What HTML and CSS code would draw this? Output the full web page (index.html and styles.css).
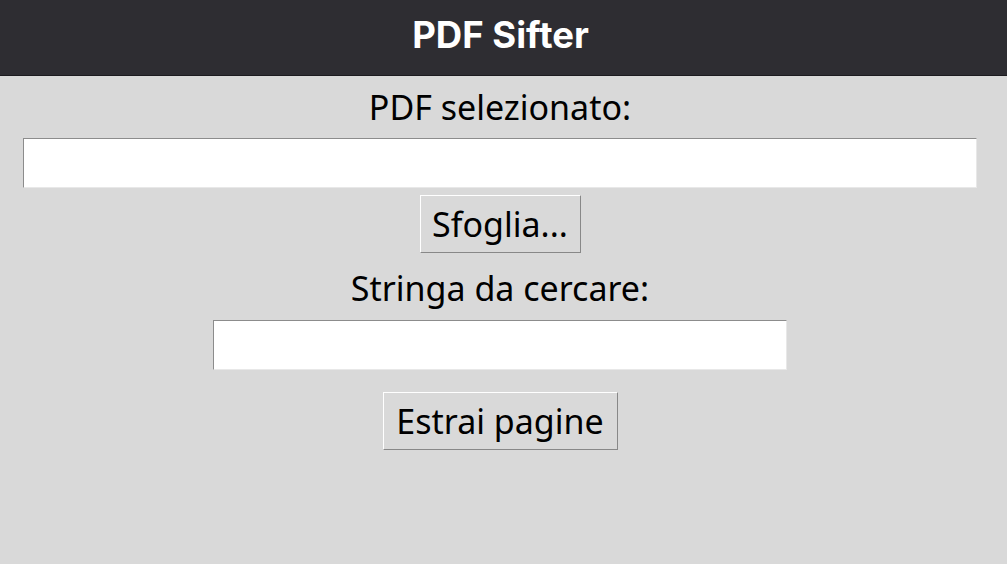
FILE: index.html
```html
<!DOCTYPE html>
<html lang="it">
<head>
<meta charset="utf-8">
<title>PDF Sifter</title>
<link rel="stylesheet" href="styles.css">
</head>
<body>
<header class="topbar"><h1 class="title">PDF Sifter</h1></header>
<main class="form">
  <label class="label label-pdf" for="pdf">PDF selezionato:</label>
  <input class="entry entry-wide" id="pdf" type="text">
  <button class="btn btn-browse" type="button">Sfoglia...</button>
  <label class="label label-search" for="q">Stringa da cercare:</label>
  <input class="entry entry-narrow" id="q" type="text">
  <button class="btn btn-extract" type="button">Estrai pagine</button>
</main>
</body>
</html>
```
FILE: styles.css
```css
html, body {
  margin: 0;
  padding: 0;
  height: 100%;
}
body {
  background: #d9d9d9;
  font-family: "Noto Sans", "DejaVu Sans", sans-serif;
  color: #000;
}
.topbar {
  box-sizing: border-box;
  height: 76px;
  background: #2e2d32;
  border-bottom: 1px solid #1c1b1f;
  display: flex;
  align-items: center;
  justify-content: center;
  padding-right: 6px;
}
.title {
  margin: 0;
  color: #ffffff;
  font-family: Inter, "Liberation Sans", sans-serif;
  font-weight: 700;
  font-size: 36.5px;
  line-height: 1;
  padding-bottom: 4px;
}
.form {
  display: flex;
  flex-direction: column;
  align-items: center;
  padding-right: 7px;
}
.label {
  font-size: 34px;
  line-height: 38px;
  height: 38px;
}
.label-pdf { margin-top: 12px; }
.label-search { margin-top: 16px; }
.entry {
  box-sizing: border-box;
  height: 50px;
  background: #fff;
  border-style: solid;
  border-width: 1px;
  border-color: #8c8c8c #e8e8e8 #e8e8e8 #8c8c8c;
  outline: none;
  padding: 0 4px;
  font: inherit;
  font-size: 28px;
  margin: 0;
}
.entry-wide { width: 954px; margin-top: 12px; }
.entry-narrow { width: 574px; margin-top: 13px; }
.btn {
  box-sizing: border-box;
  height: 58px;
  background: #d9d9d9;
  border-style: solid;
  border-width: 1px;
  border-color: #ffffff #888888 #888888 #ffffff;
  font-family: inherit;
  font-size: 34px;
  line-height: 1;
  color: #000;
  padding: 0;
  margin: 0;
}
.btn-browse { margin-top: 7px; width: 161px; }
.btn-extract { margin-top: 22px; width: 235px; }
```
